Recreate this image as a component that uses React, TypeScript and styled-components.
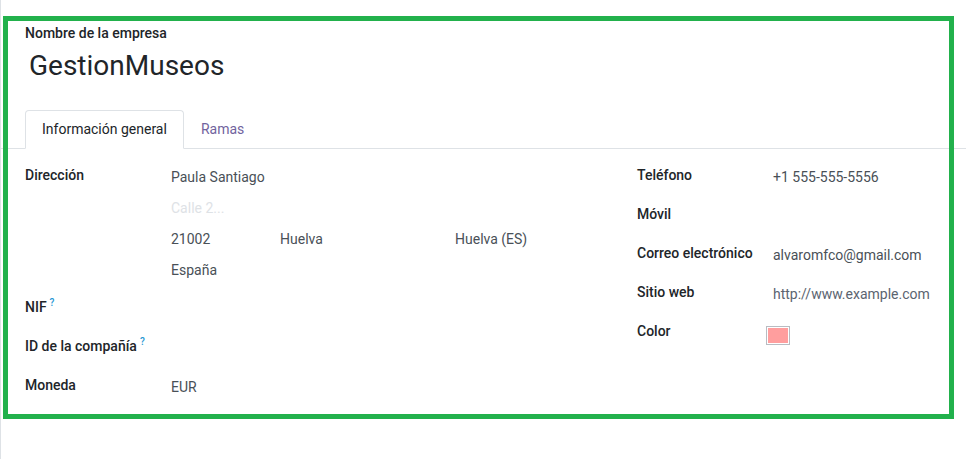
import React from "react";
import styled, { createGlobalStyle } from "styled-components";

const GlobalStyle = createGlobalStyle`
  html, body {
    margin: 0;
    padding: 0;
    background: #ffffff;
  }
  body {
    font-family: Roboto, "Noto Sans", "Liberation Sans", sans-serif;
    font-size: 14px;
    line-height: 21px;
    color: #212529;
    -webkit-font-smoothing: antialiased;
  }
`;

const Page = styled.div`
  position: relative;
  width: 966px;
  height: 459px;
  overflow: hidden;
  border-left: 1px solid #dee2e6;
  box-sizing: border-box;
`;

const Head = styled.div`
  padding: 23px 24px 0 24px;
`;

const NameLabel = styled.div`
  font-weight: 500;
  font-size: 14px;
  color: #212529;
`;

const Title = styled.h1`
  margin: 6px 0 0 4px;
  font-size: 28px;
  line-height: 31px;
  font-weight: 400;
  color: #212529;
`;

const TabBar = styled.ul`
  display: flex;
  margin: 29px 0 0 0;
  padding: 0 0 0 24px;
  list-style: none;
  border-bottom: 1px solid #dee2e6;
`;

const Tab = styled.li<{ $active?: boolean }>`
  padding: 8px 16px;
  margin-bottom: -1px;
  border: 1px solid ${(p) => (p.$active ? "#dee2e6" : "transparent")};
  border-bottom-color: ${(p) => (p.$active ? "#ffffff" : "transparent")};
  border-radius: 4px 4px 0 0;
  background: ${(p) => (p.$active ? "#ffffff" : "transparent")};
  color: ${(p) => (p.$active ? "#212529" : "#71639e")};
`;

const Body = styled.div`
  display: grid;
  grid-template-columns: 587px 1fr;
  column-gap: 25px;
  padding: 12px 24px 0 24px;
`;

const Group = styled.div<{ $labelWidth: number }>`
  display: grid;
  grid-template-columns: ${(p) => p.$labelWidth}px 1fr;
  align-content: start;
  row-gap: 8px;
`;

const Label = styled.div`
  padding-top: 4px;
  font-weight: 500;
  color: #212529;
  white-space: nowrap;
`;

const Help = styled.sup`
  margin-left: 3px;
  font-size: 10px;
  font-weight: 500;
  color: #1f97d4;
  vertical-align: 6px;
  line-height: 0;
`;

const Value = styled.div`
  min-height: 31px;
  padding: 6px 0 4px 0;
  box-sizing: border-box;
  color: #495057;
  white-space: nowrap;
`;

const Address = styled.div`
  display: grid;
  grid-template-columns: 109px 175px 1fr;
`;

const Line = styled.div<{ $placeholder?: boolean; $full?: boolean }>`
  height: 31px;
  padding-top: 6px;
  box-sizing: border-box;
  color: ${(p) => (p.$placeholder ? "#dee2e6" : "#495057")};
  grid-column: ${(p) => (p.$full ? "1 / -1" : "auto")};
`;

const Link = styled.span`
  color: #5b6470;
`;

const Swatch = styled.div<{ $color: string }>`
  width: 20px;
  height: 15px;
  margin: 3px 0 0 -7px;
  padding: 1px;
  border: 1px solid #b8bcc2;
  background: ${(p) => p.$color};
  background-clip: content-box;
  box-sizing: content-box;
`;

const Highlight = styled.div`
  position: absolute;
  left: 2px;
  top: 16px;
  width: 951px;
  height: 403px;
  border: 5px solid #22b14c;
  box-sizing: border-box;
  pointer-events: none;
`;

export default function App() {
  return (
    <>
      <GlobalStyle />
      <Page>
        <Head>
          <NameLabel>Nombre de la empresa</NameLabel>
          <Title>GestionMuseos</Title>
        </Head>
        <TabBar>
          <Tab $active>Información general</Tab>
          <Tab>Ramas</Tab>
        </TabBar>
        <Body>
          <Group $labelWidth={146}>
            <Label>Dirección</Label>
            <Address>
              <Line $full>Paula Santiago</Line>
              <Line $full $placeholder>Calle 2...</Line>
              <Line>21002</Line>
              <Line>Huelva</Line>
              <Line>Huelva (ES)</Line>
              <Line $full>España</Line>
            </Address>
            <Label>
              NIF<Help>?</Help>
            </Label>
            <Value />
            <Label>
              ID de la compañía<Help>?</Help>
            </Label>
            <Value />
            <Label>Moneda</Label>
            <Value>EUR</Value>
          </Group>
          <Group $labelWidth={136}>
            <Label>Teléfono</Label>
            <Value>+1 555-555-5556</Value>
            <Label>Móvil</Label>
            <Value />
            <Label>Correo electrónico</Label>
            <Value>alvaromfco@gmail.com</Value>
            <Label>Sitio web</Label>
            <Value>
              <Link>http://www.example.com</Link>
            </Value>
            <Label>Color</Label>
            <Value>
              <Swatch $color="#ff9e9e" />
            </Value>
          </Group>
        </Body>
        <Highlight />
      </Page>
    </>
  );
}
